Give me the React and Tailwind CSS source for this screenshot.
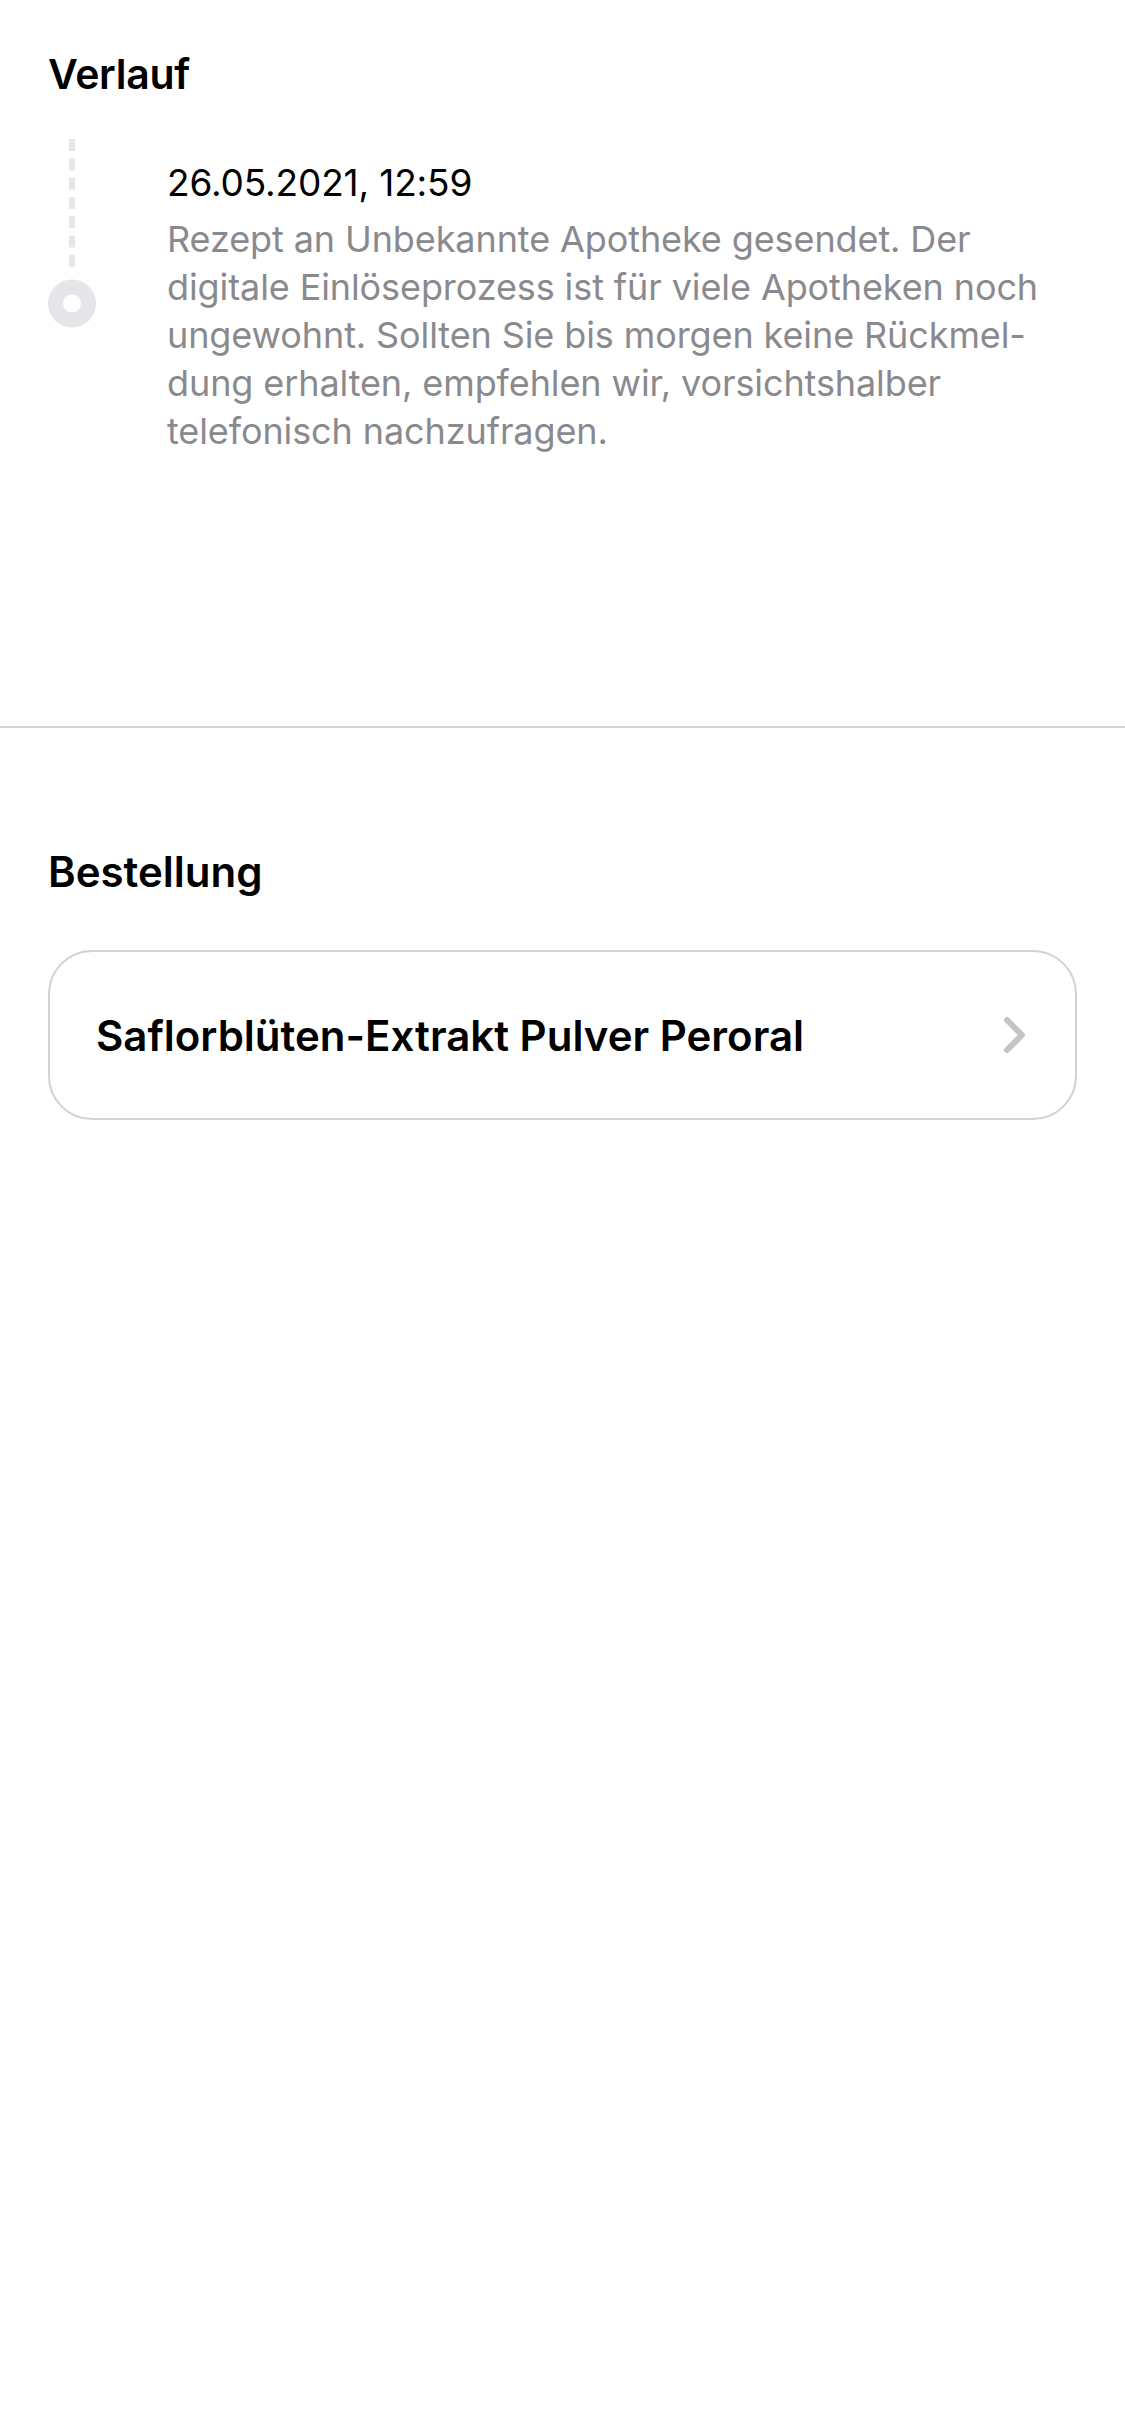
import React from "react";

const historyLines = [
  "Rezept an Unbekannte Apotheke gesendet. Der",
  "digitale Einlöseprozess ist für viele Apotheken noch",
  "ungewohnt. Sollten Sie bis morgen keine Rückmel-",
  "dung erhalten, empfehlen wir, vorsichtshalber",
  "telefonisch nachzufragen.",
];

function TimelineMarker() {
  // dashed connector + ring
  const dashes = [0, 1, 2, 3, 4, 5, 6];
  return (
    <svg width="48" height="190" viewBox="0 0 48 190" className="shrink-0">
      {dashes.map((i) => (
        <rect key={i} x="21" y={i * 19.3} width="6" height="12" fill="#e5e5ea" />
      ))}
      <circle cx="24" cy="164.5" r="24" fill="#e5e5ea" />
      <circle cx="24" cy="164.5" r="9" fill="#ffffff" />
    </svg>
  );
}

function Chevron() {
  return (
    <svg width="24" height="38" viewBox="0 0 24 38" className="shrink-0">
      <polyline
        points="4,4 19,19 4,34"
        fill="none"
        stroke="#c4c4c7"
        strokeWidth="6"
        strokeLinecap="round"
        strokeLinejoin="round"
      />
    </svg>
  );
}

export default function App() {
  return (
    <div
      className="min-h-[2436px] w-[1125px] bg-white text-black"
      style={{ fontFamily: "Inter, 'Noto Sans', sans-serif" }}
    >
      {/* Verlauf */}
      <section className="px-[48px] pt-[50px]">
        <h2 className="text-[41px] leading-[48px] font-semibold tracking-[-0.3px]">
          Verlauf
        </h2>

        <div className="mt-[41px] flex">
          <TimelineMarker />
          <div className="ml-[71px] pt-[20px]">
            <div className="text-[37px] leading-[48px] tracking-[-0.15px]">
              26.05.2021, 12:59
            </div>
            <div className="mt-[8px] text-[36px] leading-[48px] text-[#8a8a8e] tracking-[-0.1px]">
              {historyLines.map((line) => (
                <div key={line} className="whitespace-nowrap">
                  {line}
                </div>
              ))}
            </div>
          </div>
        </div>
      </section>

      <div className="mt-[271px] h-[2px] w-full bg-[#d1d1d6]" />

      {/* Bestellung */}
      <section className="px-[48px] pt-[120px]">
        <h2 className="text-[42px] leading-[48px] font-semibold">
          Bestellung
        </h2>

        <button className="mt-[54px] flex h-[170px] w-full items-center justify-between rounded-[44px] border-2 border-[#d1d1d6] bg-white pl-[46px] pr-[48px] text-left">
          <span className="text-[42px] font-semibold">
            Saflorblüten-Extrakt Pulver Peroral
          </span>
          <Chevron />
        </button>
      </section>
    </div>
  );
}
